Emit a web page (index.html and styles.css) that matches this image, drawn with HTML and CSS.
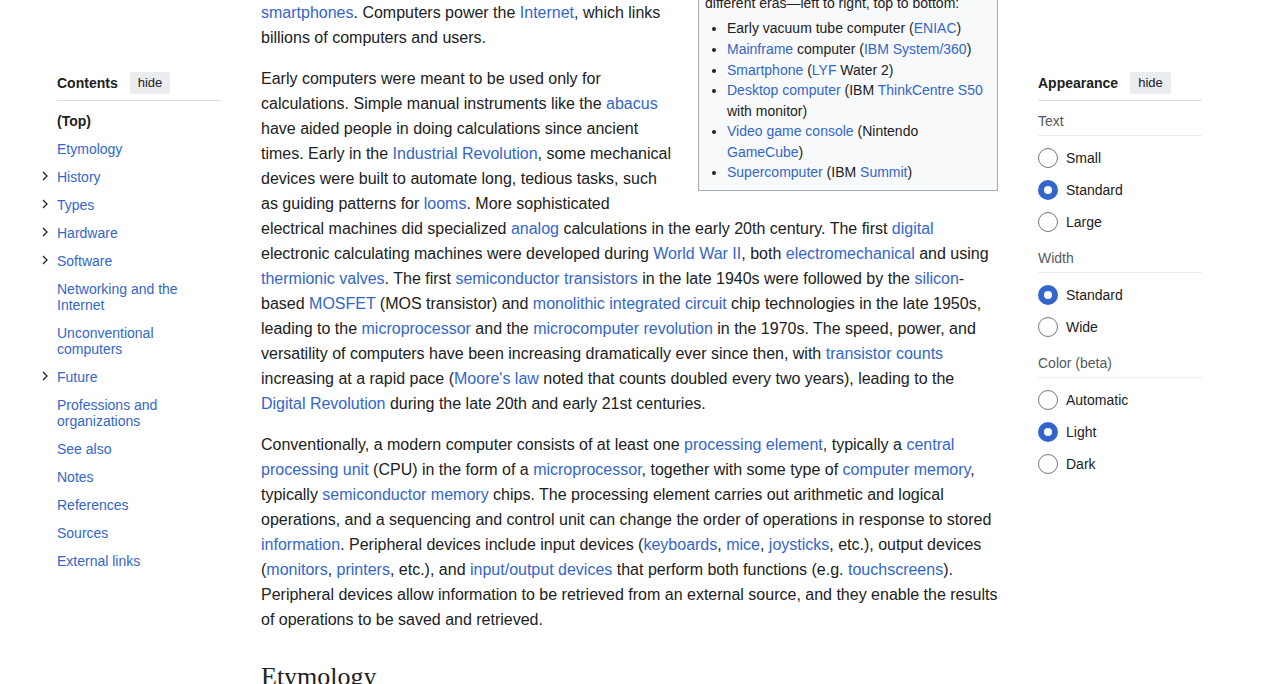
FILE: index.html
```html
<!DOCTYPE html>
<html lang="en">
<head>
<meta charset="utf-8">
<title>Computer - Wikipedia</title>
<link rel="stylesheet" href="styles.css">
</head>
<body>
<div class="page">
  <nav class="toc">
    <div class="pin-header">
      <span class="pin-title">Contents</span>
      <button class="hide-btn">hide</button>
    </div>
    <ul class="toc-list">
      <li class="toc-item"><span class="tog"></span><a class="toc-link toc-top">(Top)</a></li>
      <li class="toc-item"><span class="tog"></span><a class="toc-link">Etymology</a></li>
      <li class="toc-item"><span class="tog"><svg class="chev" viewBox="0 0 6 10" width="6" height="10"><polyline points="1,1 5,5 1,9"/></svg></span><a class="toc-link">History</a></li>
      <li class="toc-item"><span class="tog"><svg class="chev" viewBox="0 0 6 10" width="6" height="10"><polyline points="1,1 5,5 1,9"/></svg></span><a class="toc-link">Types</a></li>
      <li class="toc-item"><span class="tog"><svg class="chev" viewBox="0 0 6 10" width="6" height="10"><polyline points="1,1 5,5 1,9"/></svg></span><a class="toc-link">Hardware</a></li>
      <li class="toc-item"><span class="tog"><svg class="chev" viewBox="0 0 6 10" width="6" height="10"><polyline points="1,1 5,5 1,9"/></svg></span><a class="toc-link">Software</a></li>
      <li class="toc-item"><span class="tog"></span><a class="toc-link">Networking and the Internet</a></li>
      <li class="toc-item"><span class="tog"></span><a class="toc-link">Unconventional computers</a></li>
      <li class="toc-item"><span class="tog"><svg class="chev" viewBox="0 0 6 10" width="6" height="10"><polyline points="1,1 5,5 1,9"/></svg></span><a class="toc-link">Future</a></li>
      <li class="toc-item"><span class="tog"></span><a class="toc-link">Professions and organizations</a></li>
      <li class="toc-item"><span class="tog"></span><a class="toc-link">See also</a></li>
      <li class="toc-item"><span class="tog"></span><a class="toc-link">Notes</a></li>
      <li class="toc-item"><span class="tog"></span><a class="toc-link">References</a></li>
      <li class="toc-item"><span class="tog"></span><a class="toc-link">Sources</a></li>
      <li class="toc-item"><span class="tog"></span><a class="toc-link">External links</a></li>
    </ul>
  </nav>

  <main class="content">
    <div class="infobox">
      <div class="caption">Computers and computing devices from<br>different eras—left to right, top to bottom:</div>
      <ul class="ib-list">
        <li>Early vacuum tube computer (<a>ENIAC</a>)</li>
        <li><a>Mainframe</a> computer (<a>IBM System/360</a>)</li>
        <li><a>Smartphone</a> (<a>LYF</a> Water 2)</li>
        <li><a>Desktop computer</a> (IBM <a>ThinkCentre S50</a> with monitor)</li>
        <li><a>Video game console</a> (Nintendo <a>GameCube</a>)</li>
        <li><a>Supercomputer</a> (IBM <a>Summit</a>)</li>
      </ul>
    </div>
    <p><a>smartphones</a>. Computers power the <a>Internet</a>, which links billions of computers and users.</p>
    <p>Early computers were meant to be used only for calculations. Simple manual instruments like the <a>abacus</a> have aided people in doing calculations since ancient times. Early in the <a>Industrial Revolution</a>, some mechanical devices were built to automate long, tedious tasks, such as guiding patterns for <a>looms</a>. More sophisticated electrical machines did specialized <a>analog</a> calculations in the early 20th century. The first <a>digital</a> electronic calculating machines were developed during <a>World War II</a>, both <a>electromechanical</a> and using <a>thermionic valves</a>. The first <a>semiconductor transistors</a> in the late 1940s were followed by the <a>silicon</a>-based <a>MOSFET</a> (MOS transistor) and <a>monolithic integrated circuit</a> chip technologies in the late 1950s, leading to the <a>microprocessor</a> and the <a>microcomputer revolution</a> in the 1970s. The speed, power, and versatility of computers have been increasing dramatically ever since then, with <a>transistor counts</a> increasing at a rapid pace (<a>Moore's law</a> noted that counts doubled every two years), leading to the <a>Digital Revolution</a> during the late 20th and early 21st centuries.</p>
    <p>Conventionally, a modern computer consists of at least one <a>processing element</a>, typically a <a>central processing unit</a> (CPU) in the form of a <a>microprocessor</a>, together with some type of <a>computer memory</a>, typically <a>semiconductor memory</a> chips. The processing element carries out arithmetic and logical operations, and a sequencing and control unit can change the order of operations in response to stored <a>information</a>. Peripheral devices include input devices (<a>keyboards</a>, <a>mice</a>, <a>joysticks</a>, etc.), output devices (<a>monitors</a>, <a>printers</a>, etc.), and <a>input/output devices</a> that perform both functions (e.g. <a>touchscreens</a>). Peripheral devices allow information to be retrieved from an external source, and they enable the results of operations to be saved and retrieved.</p>
    <h2>Etymology</h2>
  </main>

  <aside class="appearance">
    <div class="pin-header">
      <span class="pin-title">Appearance</span>
      <button class="hide-btn">hide</button>
    </div>
    <div class="ap-label">Text</div>
    <div class="radio-group">
      <div class="radio-row"><span class="radio"></span><span>Small</span></div>
      <div class="radio-row"><span class="radio checked"></span><span>Standard</span></div>
      <div class="radio-row"><span class="radio"></span><span>Large</span></div>
    </div>
    <div class="ap-label">Width</div>
    <div class="radio-group">
      <div class="radio-row"><span class="radio checked"></span><span>Standard</span></div>
      <div class="radio-row"><span class="radio"></span><span>Wide</span></div>
    </div>
    <div class="ap-label">Color (beta)</div>
    <div class="radio-group">
      <div class="radio-row"><span class="radio"></span><span>Automatic</span></div>
      <div class="radio-row"><span class="radio checked"></span><span>Light</span></div>
      <div class="radio-row"><span class="radio"></span><span>Dark</span></div>
    </div>
  </aside>
</div>
</body>
</html>
```

FILE: styles.css
```css
html, body {
  margin: 0;
  padding: 0;
  background: #ffffff;
  overflow: hidden;
  height: 684px;
}
body {
  font-family: "Liberation Sans", Arial, sans-serif;
  color: #202122;
}
a {
  color: #3366cc;
  text-decoration: none;
  cursor: pointer;
}
.page {
  display: grid;
  grid-template-columns: 164px 737px 164px;
  column-gap: 40px;
  padding-left: 57px;
  align-items: start;
}

/* pinned headers */
.pin-header {
  display: flex;
  align-items: center;
  gap: 12px;
  padding-bottom: 6px;
  border-bottom: 1px solid #dadde3;
}
.pin-title {
  font-size: 14px;
  font-weight: bold;
  line-height: 22px;
}
.hide-btn {
  font-family: "Liberation Sans", Arial, sans-serif;
  font-size: 13px;
  color: #202122;
  background: #eaecf0;
  border: none;
  border-radius: 2px;
  height: 22px;
  padding: 0 8px;
  line-height: 22px;
}

/* TOC */
.toc {
  padding-top: 72px;
}
.toc-list {
  list-style: none;
  margin: 6px 0 0 -20px;
  padding: 0;
}
.toc-item {
  display: grid;
  grid-template-columns: 20px 1fr;
  align-items: start;
}
.tog {
  display: flex;
  align-items: center;
  height: 16px;
  padding-top: 5px;
  padding-left: 5px;
}
.chev {
  display: block;
  fill: none;
  stroke: #202122;
  stroke-width: 1.3;
}
.toc-link {
  font-size: 14px;
  line-height: 16px;
  padding: 6px 0;
  display: block;
}
.toc-top {
  color: #202122;
  font-weight: bold;
}

/* main content */
.content {
  font-size: 16px;
  line-height: 25px;
}
.content p {
  margin: 0 0 16px;
}
.infobox {
  float: right;
  box-sizing: border-box;
  width: 300px;
  margin: -31px 0 7px 24px;
  padding: 3px 6px 7px 6px;
  background: #f8f9fa;
  border: 1px solid #a2a9b1;
  font-size: 14px;
  line-height: 20.4px;
}
.ib-list {
  margin: 4.5px 0 0 22px;
  padding: 0;
  line-height: 20.2px;
}
.ib-list li {
  margin-bottom: 0.5px;
}
.content h2 {
  font-family: "Liberation Serif", "Times New Roman", serif;
  font-weight: normal;
  font-size: 26px;
  line-height: 34px;
  margin: 28px 0 0;
}

/* appearance */
.appearance {
  padding-top: 72px;
}
.ap-label {
  font-size: 14px;
  line-height: 20px;
  color: #54595d;
  margin-top: 10px;
  padding-bottom: 4px;
  border-bottom: 1px solid #eaecf0;
}
.radio-group {
  margin-top: 6px;
}
.radio-row {
  display: flex;
  align-items: center;
  gap: 8px;
  height: 32px;
  font-size: 14px;
}
.radio {
  box-sizing: border-box;
  width: 20px;
  height: 20px;
  border-radius: 50%;
  border: 1px solid #72777d;
  background: #ffffff;
}
.radio.checked {
  border: 6px solid #3366cc;
}
```
